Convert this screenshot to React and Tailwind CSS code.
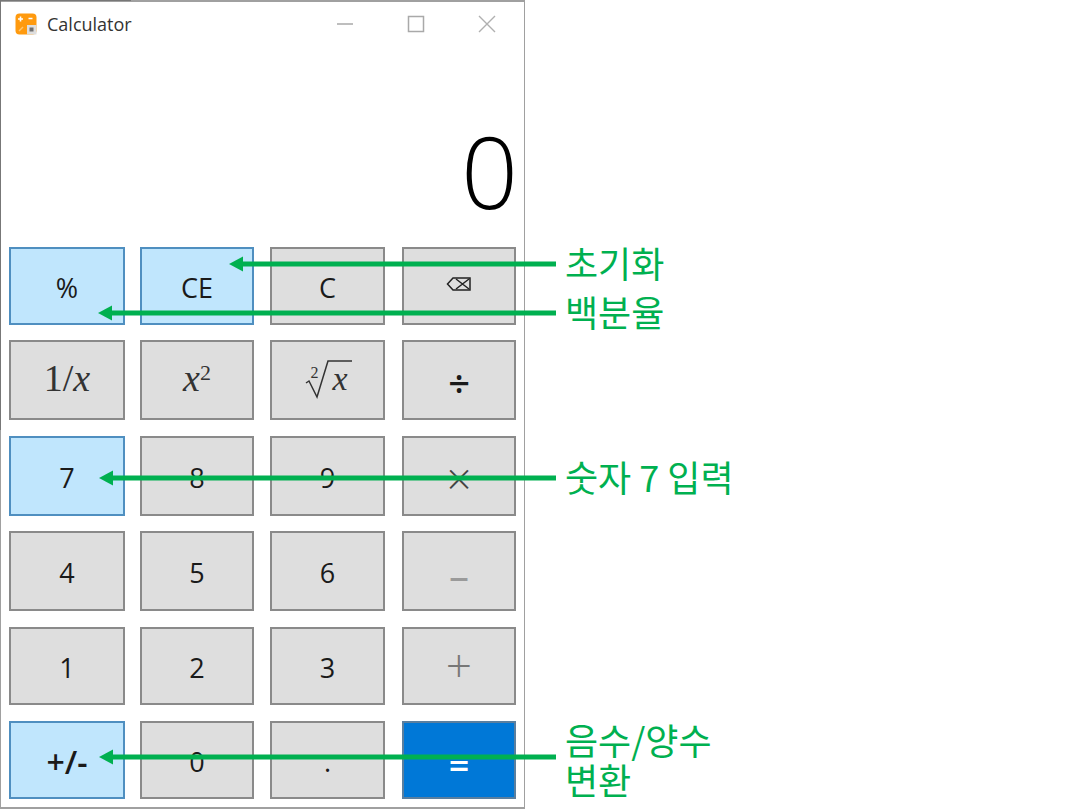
import React from 'react';

const colWidths = ['w-[116px]', 'w-[114px]', 'w-[115px]', 'w-[114px]'];
const rowHeights = ['h-[78px]', 'h-[80px]', 'h-[80px]', 'h-[80px]', 'h-[78px]', 'h-[78px]'];

function AppLogo() {
  return (
    <svg width="22" height="22" viewBox="0 0 22 22" className="shrink-0">
      <rect x="0.5" y="0.5" width="21" height="21" rx="4" fill="#ff9a0e" />
      <rect x="12" y="12" width="9.5" height="9.5" fill="#dedede" />
      <rect x="14.5" y="14.5" width="4" height="4" fill="#6f6f6f" />
      <path d="M3 6h5M5.5 3.5v5M13.5 5.5h4" stroke="#fff" strokeWidth="1.6" />
      <path d="M4 18l4-4" stroke="#ffc56e" strokeWidth="1.4" />
    </svg>
  );
}

function WindowControls() {
  return (
    <div className="ml-auto flex items-center">
      <svg width="18" height="18" viewBox="0 0 18 18" className="mr-[53px]">
        <path d="M1 9h16" stroke="#a9a9a9" strokeWidth="1.5" />
      </svg>
      <svg width="18" height="18" viewBox="0 0 18 18" className="mr-[53px]">
        <rect x="1.5" y="1.5" width="15" height="15" fill="none" stroke="#a9a9a9" strokeWidth="1.5" />
      </svg>
      <svg width="18" height="18" viewBox="0 0 18 18" className="mr-[28px]">
        <path d="M1 1l16 16M17 1L1 17" stroke="#b0b0b0" strokeWidth="1.4" />
      </svg>
    </div>
  );
}

function BackspaceIcon() {
  return (
    <svg width="26" height="16" viewBox="0 0 26 16" className="mb-[7px]">
      <path d="M7 2h17v12H7L1.5 8z" fill="none" stroke="#222" strokeWidth="1.5" />
      <path d="M10 3l13 10M23 3L10 13" fill="none" stroke="#222" strokeWidth="1.5" />
    </svg>
  );
}

function MathText({ children, className = '' }) {
  return <span className={`font-['Liberation_Serif',serif] text-[38px] leading-none text-[#333] ${className}`}>{children}</span>;
}

function RootX() {
  return (
    <span className="relative ml-[2px] mt-[2px] flex items-center">
      <svg width="48" height="40" viewBox="0 0 48 40">
        <path d="M1 24l3-2 8 16L23 2h24" fill="none" stroke="#333" strokeWidth="1.5" />
      </svg>
      <span className="absolute left-[6px] top-[6px] font-['Liberation_Serif',serif] text-[16px] leading-none text-[#333]">2</span>
      <span className="absolute left-[28px] top-[4px] font-['Liberation_Serif',serif] text-[34px] italic leading-[32px] text-[#333]">x</span>
    </span>
  );
}

const buttons = [
  [
    { label: '%', tone: 'blue' },
    { label: 'CE', tone: 'blue' },
    { label: 'C' },
    { label: <BackspaceIcon /> },
  ],
  [
    { label: <MathText>1/<i>x</i></MathText>, raise: true },
    { label: <MathText className="italic">x<sup className="text-[22px] not-italic">2</sup></MathText>, raise: true },
    { label: <RootX />, raise: true },
    { label: <span className="text-[38px] font-semibold">÷</span> },
  ],
  [
    { label: '7', tone: 'blue' },
    { label: '8' },
    { label: '9' },
    { label: <span className="text-[44px] font-light text-[#444]">×</span> },
  ],
  [
    { label: '4' },
    { label: '5' },
    { label: '6' },
    { label: <span className="mt-[4px] text-[40px] text-[#9a9a9a]">–</span> },
  ],
  [
    { label: '1' },
    { label: '2' },
    { label: '3' },
    { label: <span className="mb-[8px] text-[46px] font-light text-[#777]">+</span> },
  ],
  [
    { label: <span className="text-[32px]">+/-</span>, tone: 'blue', bold: true },
    { label: '0' },
    { label: '.' },
    { label: <span className="mt-[8px] text-[36px]">=</span>, tone: 'primary', bold: true },
  ],
];

const toneClasses = {
  gray: 'bg-[#dedede] border-[#8a8a8a] text-[#1a1a1a]',
  blue: 'bg-[#c0e6fd] border-[#4f8fc0] text-[#1a1a1a]',
  primary: 'bg-[#0078d7] border-[#5a7f9f] text-white',
};

function CalcButton({ label, tone = 'gray', bold, raise, col, row }) {
  return (
    <button
      className={`${colWidths[col]} ${rowHeights[row]} ${toneClasses[tone]} ${bold ? 'font-semibold' : ''} ${raise ? 'pb-[4px]' : 'pt-[3px]'} flex items-center justify-center border-2 text-[27px] leading-none`}
    >
      {label}
    </button>
  );
}

function Annotation({ y, endX, children, multi }) {
  return (
    <>
      <svg className="absolute left-0 top-0" width="560" height="809" viewBox="0 0 560 809">
        <path d={`M${endX + 12} ${y}H556`} stroke="#00b050" strokeWidth="5" />
        <path d={`M${endX} ${y}l14-7.5v15z`} fill="#00b050" />
      </svg>
      <div
        className={`absolute left-[565px] font-['Noto_Sans_CJK_KR',sans-serif] text-[36px] text-[#00b050] ${multi ? 'w-[160px] leading-[40px]' : 'whitespace-nowrap leading-[44px]'}`}
        style={{ top: multi ? y - 38 : y - 24 }}
      >
        {children}
      </div>
    </>
  );
}

export default function App() {
  return (
    <div className="relative h-[809px] w-[1075px] overflow-hidden bg-white font-['Open_Sans','Noto_Sans',sans-serif]">
      <div className="flex h-[809px] w-[525px] flex-col border-2 border-l-[1.5px] border-r border-[#a0a0a0]">
        <div className="flex h-[44px] shrink-0 items-center pl-[14px]">
          <AppLogo />
          <span className="ml-[10px] text-[18px] text-[#333]">Calculator</span>
          <WindowControls />
        </div>

        <div className="flex h-[201px] shrink-0 items-center justify-end pr-[6px] pt-[47px] text-[100px] font-light leading-none text-black">
          0
        </div>

        <div className="grid grid-cols-[131px_130px_132px_114px] grid-rows-[93px_96px_95px_96px_94px_78px] pl-[8px]">
          {buttons.map((row, r) =>
            row.map((btn, c) => <CalcButton key={`${r}-${c}`} {...btn} col={c} row={r} />)
          )}
        </div>
      </div>

      <div className="absolute left-0 top-0 h-[1px] w-[131px] bg-[#777777]" />
      <div className="absolute left-0 top-0 h-[430px] w-[1px] bg-[#777777]" />

      <Annotation y={264} endX={229}>초기화</Annotation>
      <Annotation y={313} endX={98}>백분율</Annotation>
      <Annotation y={478} endX={99}>숫자 7 입력</Annotation>
      <Annotation y={757} endX={99} multi>음수/양수 변환</Annotation>
    </div>
  );
}
